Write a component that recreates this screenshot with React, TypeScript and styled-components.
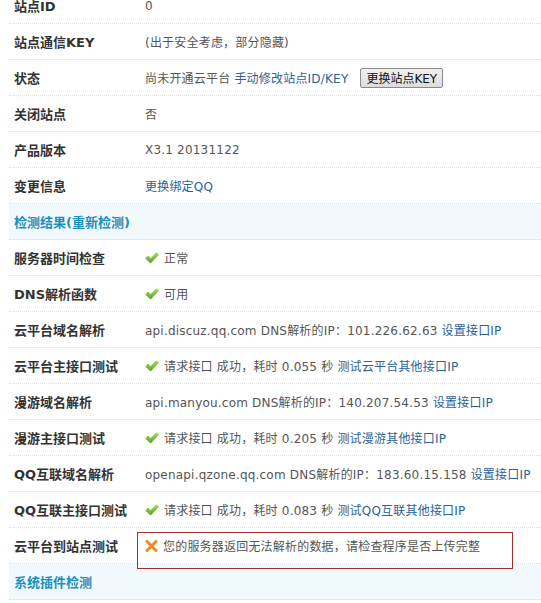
import React from 'react';
import styled, { createGlobalStyle } from 'styled-components';

const GlobalStyle = createGlobalStyle`
  html, body {
    margin: 0;
    padding: 0;
    background: #fff;
    overflow: hidden;
  }
  body {
    font-family: "DejaVu Sans", "Noto Sans CJK SC", sans-serif;
    font-size: 12px;
    color: #555;
  }
`;

const Page = styled.div`
  padding-left: 9px;
  margin-top: -12px;
`;

const Row = styled.div<{ $head?: boolean }>`
  position: relative;
  display: grid;
  grid-template-columns: 130px 1fr;
  align-items: center;
  box-sizing: border-box;
  height: 36px;
  border-bottom: 1px dotted #ddd;
  background: ${({ $head }) => ($head ? '#f2f9fd' : '#fff')};
`;

const Label = styled.div`
  padding-left: 5px;
  font-size: 13px;
  font-weight: bold;
  color: #333;
  white-space: nowrap;
`;

const HeadTitle = styled.div`
  padding-left: 5px;
  font-size: 13px;
  font-weight: bold;
  color: #1990c0;
  white-space: nowrap;
`;

const Value = styled.div`
  display: flex;
  align-items: center;
  padding-left: 6px;
  white-space: nowrap;
  letter-spacing: 0.2px;
  color: #555;
`;

const Link = styled.a`
  color: #2b6294;
  text-decoration: none;
  cursor: pointer;
`;

const Gap = styled.span`
  display: inline-block;
  width: 4px;
`;

const Button = styled.button`
  margin-left: 12px;
  height: 20px;
  padding: 0 5px;
  font-family: "DejaVu Sans", "Noto Sans CJK SC", sans-serif;
  font-size: 12px;
  color: #111;
  background: linear-gradient(#f0f0f0, #dcdcdc);
  border: 1px solid #8a8a8a;
  border-radius: 2px;
`;

const Icon = styled.svg`
  flex: none;
  margin-right: 5px;
`;

const Highlight = styled.div`
  position: absolute;
  left: 128px;
  top: 4px;
  width: 376px;
  height: 37px;
  box-sizing: border-box;
  border: 1.5px solid #a3302f;
  pointer-events: none;
  z-index: 2;
`;

const Check = () => (
  <Icon width="14" height="12" viewBox="0 0 14 12">
    <defs>
      <linearGradient id="ck" x1="0" y1="0" x2="0" y2="1">
        <stop offset="0" stopColor="#a9dc5e" />
        <stop offset="1" stopColor="#5a9f2a" />
      </linearGradient>
    </defs>
    <polygon points="0.2,6.4 3,3.6 5.6,6.3 11.3,0.2 14,2.8 5.6,11.6" fill="url(#ck)" />
  </Icon>
);

const Cross = () => (
  <Icon width="13" height="12" viewBox="0 0 13 12">
    <path d="M2 1.5 L11 10.5 M11 1.5 L2 10.5" stroke="#f08a22" strokeWidth="3" strokeLinecap="round" />
  </Icon>
);

const Ok = ({ time, link }: { time: string; link: string }) => (
  <>
    <Check />
    请求接口 成功，耗时 {time} 秒<Gap />
    <Link>{link}</Link>
  </>
);

const Dns = ({ host, ip }: { host: string; ip: string }) => (
  <>
    {host} DNS解析的IP：{ip}<Gap />
    <Link>设置接口IP</Link>
  </>
);

export default function App() {
  return (
    <>
      <GlobalStyle />
      <Page>
        <Row>
          <Label>站点ID</Label>
          <Value>0</Value>
        </Row>
        <Row>
          <Label>站点通信KEY</Label>
          <Value>(出于安全考虑，部分隐藏)</Value>
        </Row>
        <Row>
          <Label>状态</Label>
          <Value>
            尚未开通云平台<Gap />
            <Link>手动修改站点ID/KEY</Link>
            <Button>更换站点KEY</Button>
          </Value>
        </Row>
        <Row>
          <Label>关闭站点</Label>
          <Value>否</Value>
        </Row>
        <Row>
          <Label>产品版本</Label>
          <Value>X3.1 20131122</Value>
        </Row>
        <Row>
          <Label>变更信息</Label>
          <Value>
            <Link>更换绑定QQ</Link>
          </Value>
        </Row>
        <Row $head>
          <HeadTitle>检测结果(重新检测)</HeadTitle>
        </Row>
        <Row>
          <Label>服务器时间检查</Label>
          <Value>
            <Check />
            正常
          </Value>
        </Row>
        <Row>
          <Label>DNS解析函数</Label>
          <Value>
            <Check />
            可用
          </Value>
        </Row>
        <Row>
          <Label>云平台域名解析</Label>
          <Value>
            <Dns host="api.discuz.qq.com" ip="101.226.62.63" />
          </Value>
        </Row>
        <Row>
          <Label>云平台主接口测试</Label>
          <Value>
            <Ok time="0.055" link="测试云平台其他接口IP" />
          </Value>
        </Row>
        <Row>
          <Label>漫游域名解析</Label>
          <Value>
            <Dns host="api.manyou.com" ip="140.207.54.53" />
          </Value>
        </Row>
        <Row>
          <Label>漫游主接口测试</Label>
          <Value>
            <Ok time="0.205" link="测试漫游其他接口IP" />
          </Value>
        </Row>
        <Row>
          <Label>QQ互联域名解析</Label>
          <Value>
            <Dns host="openapi.qzone.qq.com" ip="183.60.15.158" />
          </Value>
        </Row>
        <Row>
          <Label>QQ互联主接口测试</Label>
          <Value>
            <Ok time="0.083" link="测试QQ互联其他接口IP" />
          </Value>
        </Row>
        <Row>
          <Label>云平台到站点测试</Label>
          <Value>
            <Cross />
            您的服务器返回无法解析的数据，请检查程序是否上传完整
          </Value>
          <Highlight />
        </Row>
        <Row $head>
          <HeadTitle>系统插件检测</HeadTitle>
        </Row>
      </Page>
    </>
  );
}
